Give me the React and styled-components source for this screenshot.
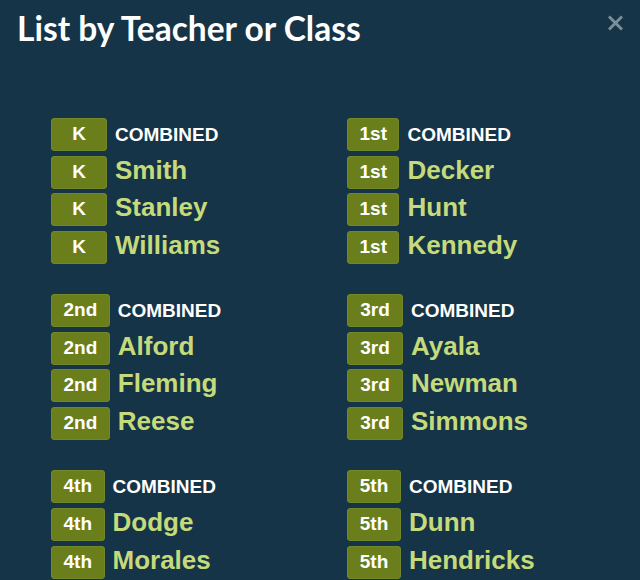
import styled, { createGlobalStyle } from 'styled-components'

const GlobalStyle = createGlobalStyle`
   html, body {
      margin: 0;
      padding: 0;
      background: #163447;
   }
`

const Panel = styled.div`
   position: relative;
   width: 640px;
   height: 580px;
   overflow: hidden;
   background: #163447;
   font-family: 'Liberation Sans', Arial, sans-serif;
`

const Title = styled.h1`
   margin: 0;
   padding: 8px 0 0 17px;
   font-family: Lato, 'Liberation Sans', sans-serif;
   font-weight: 700;
   font-size: 33.5px;
   line-height: 40px;
   color: #ffffff;
`

const Close = styled.button`
   position: absolute;
   top: 13px;
   right: 15px;
   width: 20px;
   height: 20px;
   padding: 0;
   border: 0;
   background: none;
   display: flex;
   align-items: center;
   justify-content: center;
`

const Grid = styled.div`
   display: grid;
   grid-template-columns: 296px 1fr;
   row-gap: 30px;
   padding: 70px 0 0 51px;
`

const Group = styled.div`
   display: flex;
   flex-direction: column;
   gap: 4.7px;
`

const Row = styled.div`
   display: flex;
   align-items: flex-start;
   gap: 8px;
   height: 33px;
`

const Badge = styled.span`
   display: block;
   height: 33px;
   line-height: 31px;
   min-width: ${(props) => props.$min || 0}px;
   padding: 0 12.5px;
   box-sizing: border-box;
   text-align: center;
   border-radius: 4px;
   background: #6b7e1c;
   box-shadow: inset 0 0 0 1px #738629;
   color: #ffffff;
   font-weight: 700;
   font-size: 19px;
`

const Label = styled.span`
   font-weight: 700;
   font-size: ${(props) => (props.$combined ? '19px' : '26px')};
   line-height: ${(props) => (props.$combined ? '33px' : '28px')};
   color: ${(props) => (props.$combined ? '#ffffff' : '#c4da7b')};
   white-space: nowrap;
`

const groups = [
   { grade: 'K', min: 56, names: ['Smith', 'Stanley', 'Williams'] },
   { grade: '1st', names: ['Decker', 'Hunt', 'Kennedy'] },
   { grade: '2nd', names: ['Alford', 'Fleming', 'Reese'] },
   { grade: '3rd', min: 56, names: ['Ayala', 'Newman', 'Simmons'] },
   { grade: '4th', names: ['Dodge', 'Morales'] },
   { grade: '5th', min: 54, names: ['Dunn', 'Hendricks'] },
]

function App() {
   return (
      <Panel>
         <GlobalStyle />
         <Title>List by Teacher or Class</Title>
         <Close aria-label="Close">
            <svg width="17" height="16" viewBox="0 0 17 16">
               <path d="M2 1.5 L15 14.5 M15 1.5 L2 14.5" stroke="#7b8e99" strokeWidth="3" />
            </svg>
         </Close>
         <Grid>
            {groups.map((g) => (
               <Group key={g.grade}>
                  <Row>
                     <Badge $min={g.min}>{g.grade}</Badge>
                     <Label $combined>COMBINED</Label>
                  </Row>
                  {g.names.map((n) => (
                     <Row key={n}>
                        <Badge $min={g.min}>{g.grade}</Badge>
                        <Label>{n}</Label>
                     </Row>
                  ))}
               </Group>
            ))}
         </Grid>
      </Panel>
   )
}

export default App
